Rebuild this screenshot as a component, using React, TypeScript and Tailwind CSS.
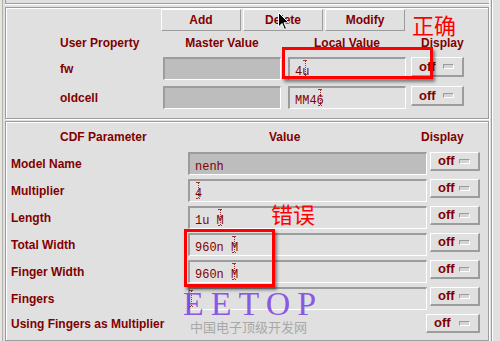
import React from 'react';

const sans = { fontFamily: '"Liberation Sans", Arial, sans-serif' };
const mono = { fontFamily: '"Liberation Mono", "Courier New", monospace' };
const cjk = { fontFamily: '"Noto Sans CJK SC", sans-serif' };

const Caret = () => (
  <span className="relative inline-block w-0 h-[12px] align-middle">
    <span className="absolute left-[-4px] top-[-3px] h-[16px] border-l border-dotted border-[#a03030]" />
    <span className="absolute left-[-6px] top-[-3px] w-[4px] border-t border-dotted border-[#a03030]" />
    <span className="absolute left-[-6px] top-[13px] w-[4px] border-t border-dotted border-[#a03030]" />
  </span>
);

const Field = ({ value, dark, caret, className }: { value?: string; dark?: boolean; caret?: boolean; className: string }) => (
  <div
    className={`${className} flex items-start pt-[4px] pl-[5px] border-t-2 border-l-2 border-[#9c9c9c] border-b border-r border-b-white border-r-white text-[12px] text-[#800000] ${
      dark ? 'bg-[#bdbdbd]' : 'bg-[#e0e0e0]'
    }`}
    style={mono}
  >
    <span className="whitespace-pre">{value}</span>
    {caret && <Caret />}
  </div>
);

const OffButton = ({ className }: { className: string }) => (
  <div
    className={`${className} flex items-center justify-between pl-[7px] pr-[8px] border-t border-l border-white border-b-2 border-r-2 border-b-[#9c9c9c] border-r-[#9c9c9c] text-[13px] font-bold text-[#800000]`}
    style={sans}
  >
    <span>off</span>
    <span className="w-[11px] h-[5px] bg-[#d4d4d4] border-t border-l border-[#9c9c9c] border-b border-r border-b-white border-r-white" />
  </div>
);

const ActionButton = ({ label }: { label: string }) => (
  <div
    className="w-[80px] h-[22px] flex items-center justify-center border-t border-l border-white border-b border-r border-b-[#9c9c9c] border-r-[#9c9c9c] text-[12px] font-bold text-[#800000]"
    style={sans}
  >
    {label}
  </div>
);

const cdfRows = [
  { label: 'Model Name', value: 'nenh', dark: true, caret: false },
  { label: 'Multiplier', value: '4', caret: true },
  { label: 'Length', value: '1u M', caret: true },
  { label: 'Total Width', value: '960n M', caret: true },
  { label: 'Finger Width', value: '960n M', caret: true },
  { label: 'Fingers', value: '', caret: true },
];

export default function App() {
  return (
    <div className="relative w-[500px] h-[341px] overflow-hidden bg-[#e0e0e0] flex select-none" style={sans}>
      {/* left edge */}
      <div className="w-[2px] bg-[#e8e5dd]" />
      <div className="w-[3px] border-l border-[#b0b0b0]" />

      {/* main column */}
      <div className="w-[484px] flex flex-col">
        <div className="h-[4px] border-b border-[#9c9c9c] shadow-[0_1px_0_#fff] border-l border-l-[#9c9c9c]" />
        <div className="h-[3px]" />

        {/* user property panel */}
        <div className="h-[112px] border border-[#9c9c9c] shadow-[inset_1px_1px_0_#fff,1px_1px_0_#fff] flex flex-col">
          <div className="flex gap-[2px] pl-[155px] pt-[1px]">
            <ActionButton label="Add" />
            <ActionButton label="Delete" />
            <ActionButton label="Modify" />
          </div>
          <div className="flex items-center h-[20px] mt-[2px] text-[12px] font-bold text-[#800000]">
            <div className="w-[157px] pl-[54px]">User Property</div>
            <div className="w-[118px] text-center">Master Value</div>
            <div className="w-[7px]" />
            <div className="w-[118px] text-center">Local Value</div>
            <div className="pl-[15px]">Display</div>
          </div>
          <div className="flex flex-col gap-[6px] mt-[4px]">
            {[
              { label: 'fw', value: '4u' },
              { label: 'oldcell', value: 'MM46' },
            ].map((r) => (
              <div key={r.label} className="flex items-start h-[23px]">
                <div className="w-[157px] pl-[54px] h-[23px] flex items-center text-[12px] font-bold text-[#800000]">{r.label}</div>
                <Field className="w-[118px] h-[23px]" dark />
                <div className="w-[7px]" />
                <Field className="w-[118px] h-[23px]" value={r.value} caret />
                <div className="w-[5px]" />
                <OffButton className="w-[53px] h-[20px]" />
              </div>
            ))}
          </div>
        </div>

        <div className="h-[2px]" />

        {/* CDF panel */}
        <div className="flex-1 border border-[#9c9c9c] shadow-[inset_1px_1px_0_#fff,1px_1px_0_#fff] flex flex-col">
          <div className="flex items-center h-[30px] text-[12px] font-bold text-[#800000]">
            <div className="w-[263px] pl-[54px]">CDF Parameter</div>
            <div className="w-[152px]">Value</div>
            <div>Display</div>
          </div>
          <div className="flex flex-col gap-[4px]">
            {cdfRows.map((r) => (
              <div key={r.label} className="flex items-start h-[23px]">
                <div className="w-[182px] pl-[5px] h-[23px] flex items-center text-[12px] font-bold text-[#800000]">{r.label}</div>
                <Field className="w-[239px] h-[23px]" value={r.value} dark={r.dark} caret={r.caret} />
                <div className="w-[3px]" />
                <OffButton className="w-[50px] h-[19px]" />
              </div>
            ))}
            <div className="flex items-start h-[23px]">
              <div className="w-[420px] pl-[5px] h-[20px] flex items-center text-[12px] font-bold text-[#800000]">Using Fingers as Multiplier</div>
              <OffButton className="w-[54px] h-[19px]" />
            </div>
          </div>
        </div>
      </div>

      {/* right edge */}
      <div className="w-[2px] border-l border-white" />
      <div className="w-[3px] border-l border-[#9c9c9c] shadow-[inset_1px_0_0_#fff]" />
      <div className="flex-1 bg-[#e0e0e0]" />

      {/* annotations */}
      <div className="absolute left-[282px] top-[47px] w-[151px] h-[32px] border-[3px] border-[#ff0000] shadow-[2px_3px_3px_rgba(0,0,0,0.45)]" />
      <div className="absolute left-[184px] top-[229px] w-[91px] h-[58px] border-[3px] border-[#ff0000] shadow-[2px_3px_3px_rgba(0,0,0,0.45)]" />
      <div className="absolute left-[412px] top-[13px] text-[22px] leading-none text-[#ff0000]" style={cjk}>正确</div>
      <div className="absolute left-[271px] top-[202px] text-[22px] leading-none text-[#ff0000]" style={cjk}>错误</div>

      {/* watermark */}
      <div
        className="absolute left-[183px] top-[287px] text-[34px] leading-none tracking-[7px] text-[#7c3ee6]/85"
        style={{ fontFamily: '"Liberation Serif", "Times New Roman", serif' }}
      >
        EETOP
      </div>
      <div className="absolute left-[190px] top-[320px] text-[13px] leading-none text-[#a8a8a8]" style={cjk}>
        中国电子顶级开发网
      </div>

      {/* mouse pointer */}
      <svg className="absolute left-[278px] top-[12px]" width="12" height="19" viewBox="0 0 12 19">
        <path d="M0.5 0.5 L0.5 15 L4 11.5 L6.5 17.5 L8.5 16.5 L6 10.8 L10.8 10.8 Z" fill="#000" stroke="#fff" strokeWidth="1" />
      </svg>
    </div>
  );
}
